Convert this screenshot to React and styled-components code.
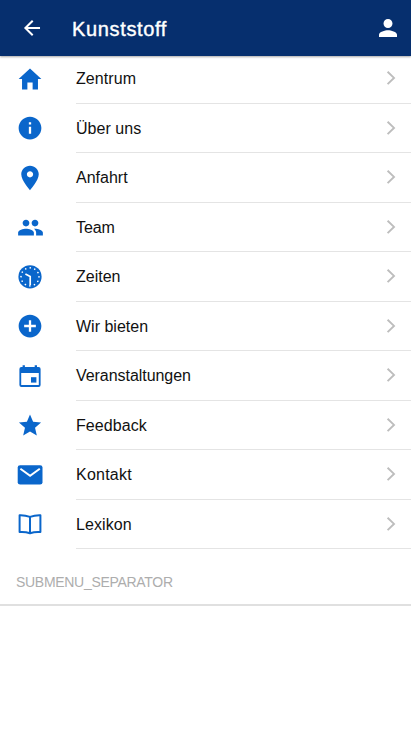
import * as React from 'react';
import styled, { createGlobalStyle } from 'styled-components';
import {
  IoMdAddCircle,
  IoMdArrowBack,
  IoMdHome,
  IoMdInformationCircle,
  IoMdPerson,
  IoMdPin,
  IoMdStar,
} from 'react-icons/io';
import { MdPeople } from 'react-icons/md';

const GlobalStyle = createGlobalStyle`
  * {
    box-sizing: border-box;
  }

  body {
    margin: 0;
    background-color: #ffffff;
    font-family: 'Liberation Sans', Arial, sans-serif;
  }

  svg {
    display: block;
  }
`;

const Screen = styled.div`
  min-height: 731px;
  overflow: hidden;
`;

const Header = styled.header`
  position: relative;
  z-index: 1;
  height: 56px;
  margin-bottom: -2px;
  padding: 0 11px 0 20px;
  display: flex;
  align-items: center;
  background-color: #062f6e;
  box-shadow: 0 1px 2px rgba(0, 0, 0, 0.35);
  color: #ffffff;
`;

const HeaderButton = styled.button`
  padding: 0;
  border-style: none;
  background: none;
  color: inherit;
  cursor: pointer;
`;

const Title = styled.h1`
  flex: 1;
  margin: 0 0 0 28px;
  padding-top: 2px;
  font-size: 20px;
  line-height: 24px;
  font-weight: 400;
  letter-spacing: 0.65px;
  -webkit-text-stroke: 0.4px #ffffff;
`;

const Menu = styled.ul`
  margin: 0;
  padding: 0;
  list-style: none;
`;

const MenuItem = styled.li`
  height: 49.5px;
  padding-left: 16px;
  display: flex;
  align-items: center;
  cursor: pointer;
`;

const IconWrapper = styled.div`
  width: 60px;
  display: flex;
  color: #0a66cb;
`;

const IconBox = styled.div`
  width: 28px;
  display: flex;
  justify-content: center;
`;

const MenuContent = styled.div`
  flex: 1;
  align-self: stretch;
  padding-right: 15px;
  display: flex;
  align-items: center;
  justify-content: space-between;
  border-bottom: 1px solid #e4e4e4;
`;

const Label = styled.span`
  padding-top: 2px;
  font-size: 16px;
  line-height: 20px;
  letter-spacing: ${(props) => props.$spacing || 0}px;
  color: #111111;
`;

const Separator = styled.div`
  height: 57px;
  padding: 23px 16px 0;
  border-bottom: 2px solid #e0e0e0;
  font-size: 14px;
  line-height: 20px;
  letter-spacing: -0.3px;
  color: #adadad;
`;

const ClockIcon = () => (
  <svg width="28" height="28" viewBox="0 0 28 28">
    <circle cx="14" cy="13.8" r="11.6" fill="currentColor" />
    <circle
      cx="14"
      cy="13.8"
      r="9"
      fill="none"
      stroke="#ffffff"
      strokeWidth="1.7"
      strokeLinecap="round"
      strokeDasharray="0.01 4.7024"
    />
    <path d="M9.4 11L14.2 13.6V22" fill="none" stroke="#ffffff" strokeWidth="1.7" />
  </svg>
);

const CalendarIcon = () => (
  <svg width="28" height="28" viewBox="0 0 28 28" fill="currentColor">
    <path
      fillRule="evenodd"
      d="M6.6 3.2h2.3v1.7h9.8V3.2H21v1.7h1.6a2 2 0 0 1 2 2v16a2 2 0 0 1-2 2H5.4a2 2 0 0 1-2-2v-16a2 2 0 0 1 2-2h1.2zM5.2 11v11.9h17.6V11z"
    />
    <path d="M15 15.2h5.4v5.4H15z" />
  </svg>
);

const MailIcon = () => (
  <svg width="28" height="28" viewBox="0 0 28 28">
    <rect x="1.7" y="4.2" width="24.8" height="19.4" rx="2.4" fill="currentColor" />
    <path d="M4.4 7.7L14.1 14.7L23.8 7.7" fill="none" stroke="#ffffff" strokeWidth="2" />
  </svg>
);

const BookIcon = () => (
  <svg
    width="28"
    height="28"
    viewBox="0 0 28 28"
    fill="none"
    stroke="currentColor"
    strokeWidth="2"
    strokeLinejoin="round"
  >
    <path d="M14 6.9Q9 5.1 3.6 5.3V22Q9 21.5 14 23.2Q19 21.5 24.4 22V5.3Q19 5.1 14 6.9z" />
    <path d="M14 7V23.2" />
  </svg>
);

const Chevron = () => (
  <svg width="10" height="16" viewBox="0 0 10 16">
    <path d="M1.6 1.7L8 7.9L1.6 14.1" fill="none" stroke="#bdbdbd" strokeWidth="1.9" />
  </svg>
);

const items = [
  { label: 'Zentrum', icon: <IoMdHome size={28} />, spacing: 0.08 },
  { label: 'Über uns', icon: <IoMdInformationCircle size={28} />, spacing: 0.05 },
  { label: 'Anfahrt', icon: <IoMdPin size={28} />, spacing: 0 },
  { label: 'Team', icon: <MdPeople size={27} />, spacing: -0.1 },
  { label: 'Zeiten', icon: <ClockIcon />, spacing: 0 },
  { label: 'Wir bieten', icon: <IoMdAddCircle size={28} />, spacing: 0 },
  { label: 'Veranstaltungen', icon: <CalendarIcon />, spacing: -0.05 },
  { label: 'Feedback', icon: <IoMdStar size={28} />, spacing: 0.08 },
  { label: 'Kontakt', icon: <MailIcon />, spacing: 0.22 },
  { label: 'Lexikon', icon: <BookIcon />, spacing: 0.08 },
];

const App = () => {
  return (
    <Screen>
      <GlobalStyle />
      <Header>
        <HeaderButton aria-label="Zurück">
          <IoMdArrowBack size={24} />
        </HeaderButton>
        <Title>Kunststoff</Title>
        <HeaderButton aria-label="Profil">
          <IoMdPerson size={24} />
        </HeaderButton>
      </Header>
      <Menu>
        {items.map((item) => (
          <MenuItem key={item.label}>
            <IconWrapper>
              <IconBox>{item.icon}</IconBox>
            </IconWrapper>
            <MenuContent>
              <Label $spacing={item.spacing}>{item.label}</Label>
              <Chevron />
            </MenuContent>
          </MenuItem>
        ))}
      </Menu>
      <Separator>SUBMENU_SEPARATOR</Separator>
    </Screen>
  );
};

export default App;
